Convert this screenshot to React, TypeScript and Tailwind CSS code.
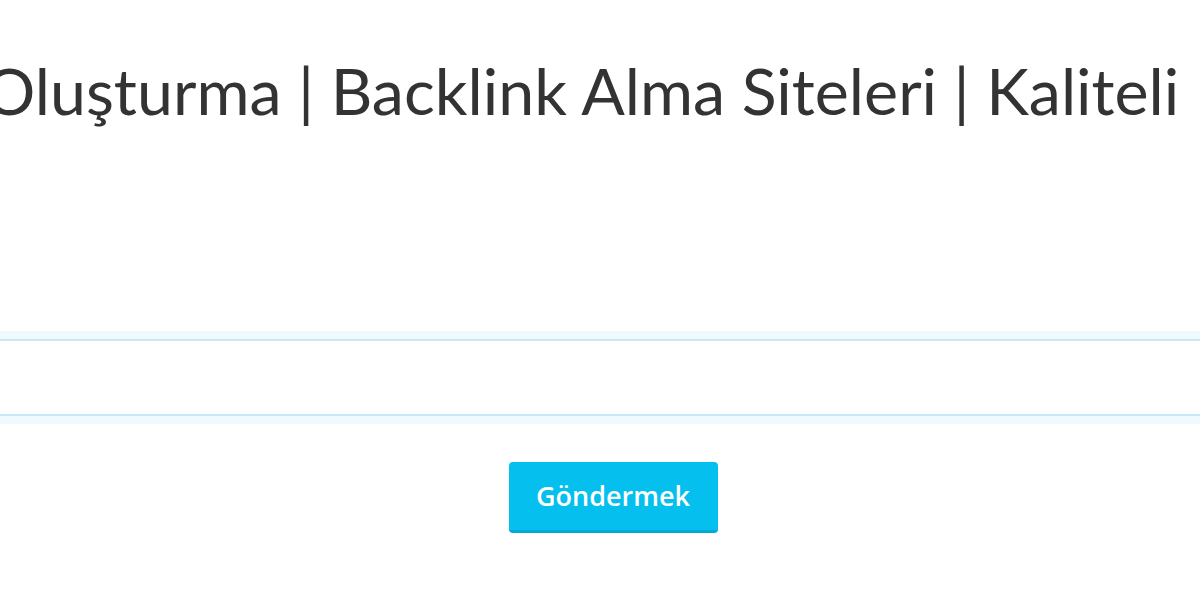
import React from "react";

export default function App() {
  return (
    <div className="w-[1200px] h-[600px] bg-white overflow-hidden relative" style={{ fontFamily: '"Open Sans", "Noto Sans", sans-serif' }}>
      <div className="h-[160px] flex justify-center overflow-hidden">
        <h1 className="whitespace-nowrap text-[64.5px] leading-[1] font-normal text-[#333333] pt-[58px] ml-[-37px]" style={{ fontFamily: 'Lato, "Open Sans", sans-serif' }}>
          Backlink Oluşturma | Backlink Alma Siteleri | Kaliteli Backlink
        </h1>
      </div>
      <div className="mt-[171px] bg-[#effafe] py-[8px]">
        <div className="h-[77px] bg-white border-y-[2px] border-[#c9e8f5]"></div>
      </div>
      <div className="flex justify-center mt-[38px] pl-[26px]">
        <button className="w-[209px] h-[71px] rounded-[4px] bg-[#05bfee] border-b-[3px] border-[#00aad8] text-white text-[27px] font-semibold">
          Göndermek
        </button>
      </div>
    </div>
  );
}
